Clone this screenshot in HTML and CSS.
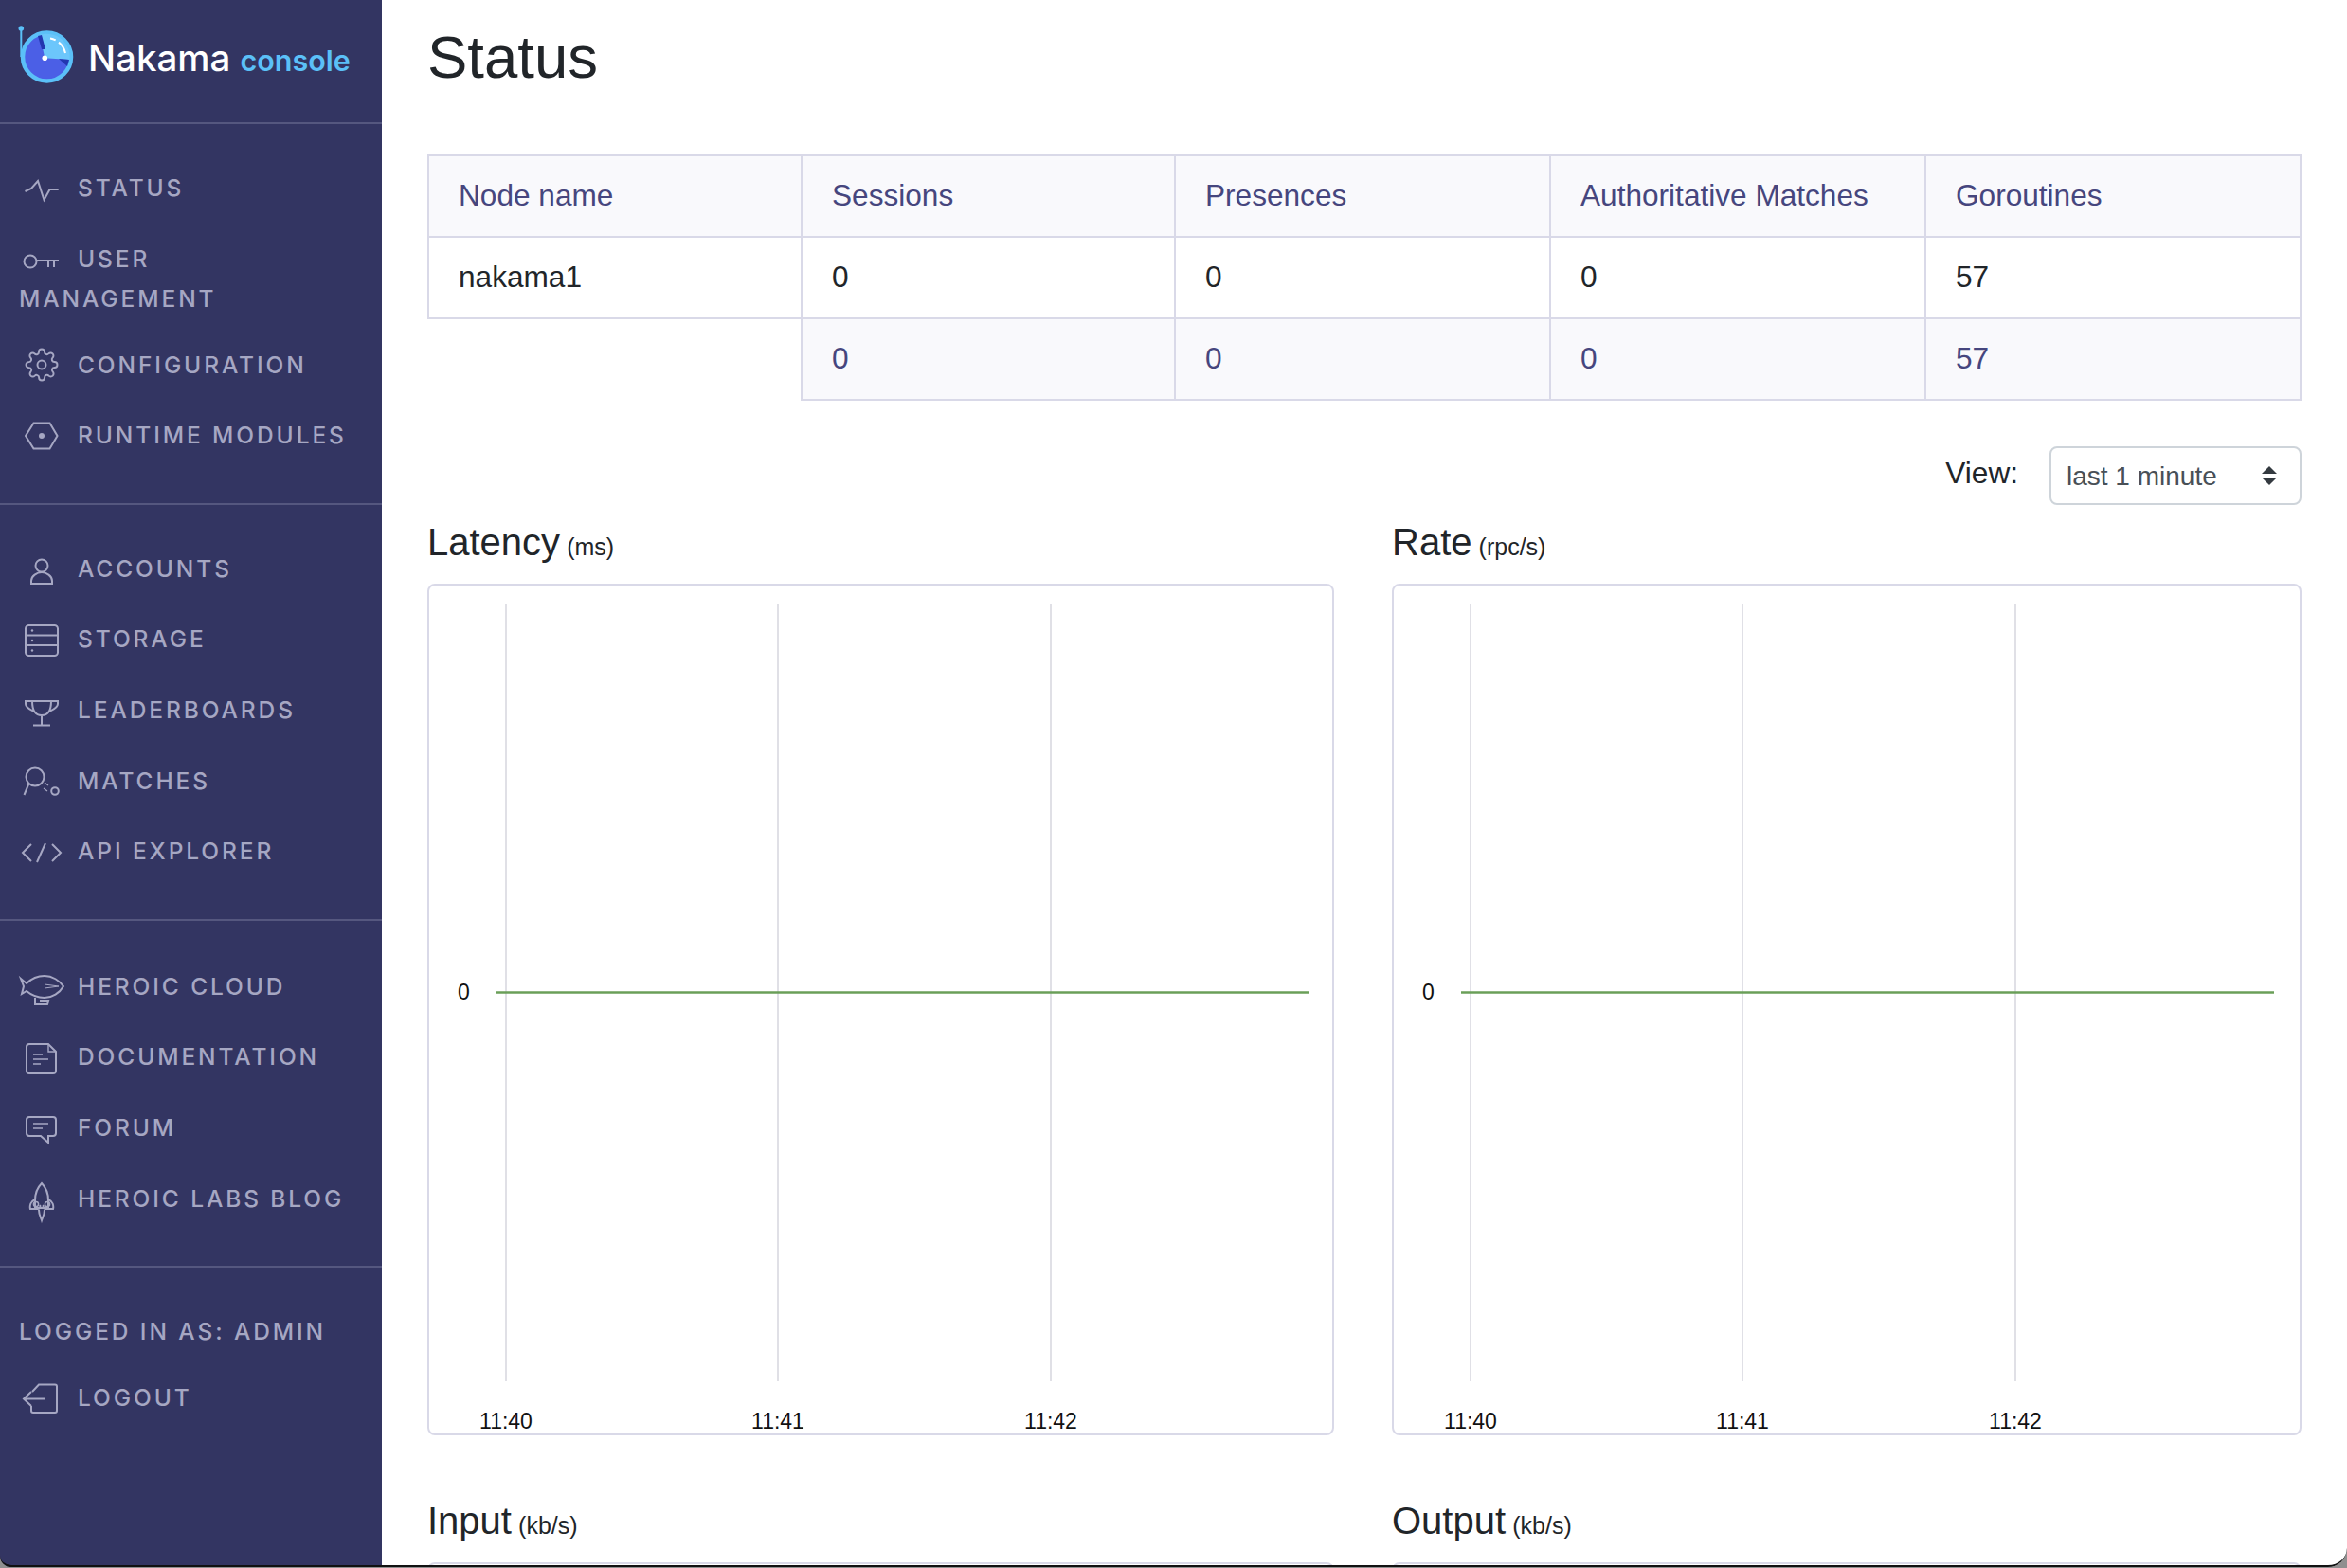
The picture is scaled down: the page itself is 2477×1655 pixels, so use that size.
FILE: index.html
```html
<!DOCTYPE html>
<html lang="en">
<head>
    <meta charset="UTF-8">
    <title>Nakama console</title>
    <link rel="stylesheet" href="styles.css">
</head>
<body>
    <aside class="sidebar">
        <a class="brand" href="#">
            <svg class="brand-logo" width="64" height="64" viewBox="0 0 64 64">
                <path d="M4.3 4V34" stroke="#5bc0f8" stroke-width="2" fill="none"/>
                <circle cx="4.3" cy="4" r="2.8" fill="#5bc0f8"/>
                <circle cx="31.5" cy="34" r="25.5" fill="#4b5fe6" stroke="#5bc0f8" stroke-width="4.5"/>
                <path d="M29.3 35.3L24 11A24 24 0 0 1 55.4 37Z" fill="#6cc6fb"/>
                <path d="M22 12L26 11L30 26L26 26Z" fill="#2336b0"/>
                <path d="M44 36L55 37L53 44Z" fill="#2336b0"/>
                <path d="M35 14.5A20 20 0 0 1 51 30" stroke="#fff" stroke-width="2" stroke-dasharray="6 4 24" fill="none"/>
                <circle cx="29.3" cy="35.3" r="2.8" fill="#fff"/>
            </svg>
            <span class="brand-name">Nakama</span>
            <span class="brand-sub">console</span>
        </a>

        <nav class="nav-section">
            <a class="nav-item" href="#">
                <svg class="nav-icon" viewBox="0 0 44 36"><path d="M4.5 21L11 18L18 10L24.5 30L30.5 19H39.7"/></svg>STATUS
            </a>
            <a class="nav-item" href="#">
                <svg class="nav-icon" viewBox="0 0 44 36"><circle cx="10" cy="21" r="6.5"/><path d="M16.5 20H40M29 20V27M35 20V27"/></svg>USER<br>MANAGEMENT
            </a>
            <a class="nav-item" href="#">
                <svg class="nav-icon" viewBox="0 0 44 36"><g transform="translate(4 0) scale(1.5)" stroke-width="1.3"><circle cx="12" cy="12" r="3"/><path d="M19.4 15a1.65 1.65 0 0 0 .33 1.82l.06.06a2 2 0 0 1 0 2.83 2 2 0 0 1-2.83 0l-.06-.06a1.65 1.65 0 0 0-1.82-.33 1.65 1.65 0 0 0-1 1.51V21a2 2 0 0 1-2 2 2 2 0 0 1-2-2v-.09A1.65 1.65 0 0 0 9 19.4a1.65 1.65 0 0 0-1.82.33l-.06.06a2 2 0 0 1-2.83 0 2 2 0 0 1 0-2.83l.06-.06a1.65 1.65 0 0 0 .33-1.82 1.65 1.65 0 0 0-1.51-1H3a2 2 0 0 1-2-2 2 2 0 0 1 2-2h.09A1.65 1.65 0 0 0 4.6 9a1.65 1.65 0 0 0-.33-1.82l-.06-.06a2 2 0 0 1 0-2.83 2 2 0 0 1 2.83 0l.06.06a1.65 1.65 0 0 0 1.82.33H9a1.65 1.65 0 0 0 1-1.51V3a2 2 0 0 1 2-2 2 2 0 0 1 2 2v.09a1.65 1.65 0 0 0 1 1.51 1.65 1.65 0 0 0 1.82-.33l.06-.06a2 2 0 0 1 2.83 0 2 2 0 0 1 0 2.83l-.06.06a1.65 1.65 0 0 0-.33 1.82V9a1.65 1.65 0 0 0 1.51 1H21a2 2 0 0 1 2 2 2 2 0 0 1-2 2h-.09a1.65 1.65 0 0 0-1.51 1z"/></g></svg>CONFIGURATION
            </a>
            <a class="nav-item" href="#">
                <svg class="nav-icon" viewBox="0 0 44 36"><path d="M5 18L13.5 4.5H30.5L38.5 18L30.5 31.5H13.5Z"/><circle class="dot" cx="22" cy="18" r="3"/></svg>RUNTIME MODULES
            </a>
        </nav>

        <nav class="nav-section">
            <a class="nav-item" href="#">
                <svg class="nav-icon" viewBox="0 0 44 36"><circle cx="22" cy="14" r="6.5"/><path d="M11 33V30C11 25 17 21 22 21S33 25 33 30V33Z"/></svg>ACCOUNTS
            </a>
            <a class="nav-item" href="#">
                <svg class="nav-icon" viewBox="0 0 44 36"><rect x="5" y="3" width="34" height="32" rx="3.5"/><path d="M5 13.5H39M5 24H39"/><circle class="dot" cx="12" cy="8.5" r="1.2"/><circle class="dot" cx="12" cy="19" r="1.2"/><circle class="dot" cx="12" cy="29.5" r="1.2"/></svg>STORAGE
            </a>
            <a class="nav-item" href="#">
                <svg class="nav-icon" viewBox="0 0 44 36"><path d="M12 8C12 17 15 23 22 23S32 17 32 8ZM12 8H5V11C5 15 10 17 14 19M32 8H39V11C39 15 34 17 30 19M22 23V33M13 33.5H31"/></svg>LEADERBOARDS
            </a>
            <a class="nav-item" href="#">
                <svg class="nav-icon" viewBox="0 0 44 36"><circle cx="15" cy="14" r="9.5"/><path d="M8.5 21L3.5 33"/><path d="M25 20L29 23M24 26L28 29" stroke-width="1.2"/><circle cx="36" cy="29" r="3.8"/></svg>MATCHES
            </a>
            <a class="nav-item" href="#">
                <svg class="nav-icon" viewBox="0 0 44 36"><path d="M11 10L2 19L11 28M26 9L17 29M33 10L42 19L33 28"/></svg>API EXPLORER
            </a>
        </nav>

        <nav class="nav-section nav-links">
            <a class="nav-item" href="#">
                <svg class="nav-icon" viewBox="0 0 44 36"><path d="M0 9L6 14C12 8 19 6 25 6C33 6 41 11 45 17C41 24 33 29 25 29C18 29 12 27 6 22L1 25L3 17Z"/><path d="M25 15L40 17L25 19" stroke-width="1"/><path d="M15 29V36H28L29 33H20"/></svg>HEROIC CLOUD
            </a>
            <a class="nav-item" href="#">
                <svg class="nav-icon" viewBox="0 0 44 36"><path d="M9 4H29L37 12V32A3 3 0 0 1 34 35H9A3 3 0 0 1 6 32V7A3 3 0 0 1 9 4Z"/><path d="M29 4V12H37M13 15H23M13 20H29M13 25H21" stroke-width="1.4"/></svg>DOCUMENTATION
            </a>
            <a class="nav-item" href="#">
                <svg class="nav-icon" viewBox="0 0 44 36"><path d="M9 6H34A3 3 0 0 1 37 9V23A3 3 0 0 1 34 26H29V33L21 26H9A3 3 0 0 1 6 23V9A3 3 0 0 1 9 6Z"/><path d="M13 13H29M13 18H23" stroke-width="1.4"/></svg>FORUM
            </a>
            <a class="nav-item" href="#">
                <svg class="nav-icon" viewBox="0 0 44 36"><path d="M22 2C17 7 15 14 15 20V28H29V20C29 14 27 7 22 2Z"/><path d="M15 19C11 21 9 25 10 29H18C20 29 21 27 20 25M29 19C33 21 35 25 34 29H26C24 29 23 27 24 25M19 30C19 35 21 38 22 41C23 38 25 35 25 30"/><circle cx="16" cy="24" r="2.6" stroke-width="1.5"/><circle cx="28" cy="24" r="2.6" stroke-width="1.5"/></svg>HEROIC LABS BLOG
            </a>
        </nav>

        <div class="nav-section">
            <div class="nav-item">LOGGED IN AS: ADMIN</div>
            <a class="nav-item" href="#">
                <svg class="nav-icon" viewBox="0 0 44 36"><path d="M12 12L19 4.5H36A2 2 0 0 1 38 6.5V32A2 2 0 0 1 36 34H13A2 2 0 0 1 11 32V27M3 19.5H25M11 12L3 19.5L11 27"/></svg>LOGOUT
            </a>
        </div>
    </aside>

    <main class="content">
        <h1 class="page-title">Status</h1>

        <table class="status-table">
            <thead>
                <tr>
                    <th class="col-node">Node name</th>
                    <th class="col-sessions">Sessions</th>
                    <th class="col-other">Presences</th>
                    <th class="col-other">Authoritative Matches</th>
                    <th>Goroutines</th>
                </tr>
            </thead>
            <tbody>
                <tr>
                    <td>nakama1</td>
                    <td>0</td>
                    <td>0</td>
                    <td>0</td>
                    <td>57</td>
                </tr>
                <tr class="totals">
                    <td class="blank"></td>
                    <td>0</td>
                    <td>0</td>
                    <td>0</td>
                    <td>57</td>
                </tr>
            </tbody>
        </table>

        <div class="view-row">
            <label class="view-label" for="view">View:</label>
            <select class="view-select" id="view">
                <option>last 1 minute</option>
            </select>
        </div>

        <div class="chart-grid">
            <section>
                <h2 class="chart-title">Latency <small>(ms)</small></h2>
                <div class="chart-card">
                    <svg class="chart">
                        <path class="grid-line" d="M81 19V840M368 19V840M656 19V840"/>
                        <path class="data-line" d="M71 429.5H928"/>
                        <text x="30" y="437">0</text>
                        <text class="tick" x="81" y="890">11:40</text>
                        <text class="tick" x="368" y="890">11:41</text>
                        <text class="tick" x="656" y="890">11:42</text>
                    </svg>
                </div>
            </section>
            <section>
                <h2 class="chart-title">Rate <small>(rpc/s)</small></h2>
                <div class="chart-card">
                    <svg class="chart">
                        <path class="grid-line" d="M81 19V840M368 19V840M656 19V840"/>
                        <path class="data-line" d="M71 429.5H929"/>
                        <text x="30" y="437">0</text>
                        <text class="tick" x="81" y="890">11:40</text>
                        <text class="tick" x="368" y="890">11:41</text>
                        <text class="tick" x="656" y="890">11:42</text>
                    </svg>
                </div>
            </section>
            <section>
                <h2 class="chart-title">Input <small>(kb/s)</small></h2>
                <div class="chart-card"></div>
            </section>
            <section>
                <h2 class="chart-title">Output <small>(kb/s)</small></h2>
                <div class="chart-card"></div>
            </section>
        </div>
    </main>

    <!-- bottom edge of the captured window -->
    <div class="window-edge"></div>
</body>
</html>
```

FILE: styles.css
```css
* {
    box-sizing: border-box;
}

html, body {
    height: 100%;
}

body {
    position: relative;
    display: flex;
    margin: 0;
    overflow: hidden;
    font-family: "Liberation Sans", Arial, sans-serif;
    color: #212529;
    background-color: #ffffff;
}

.sidebar {
    flex: 0 0 403px;
    background-color: #333562;
    font-family: Inter, "Liberation Sans", sans-serif;
    font-size: 24.5px;
    font-weight: 500;
    line-height: 37.5px;
    letter-spacing: 2.9px;
    color: #a6a7c3;
}

.brand {
    display: flex;
    align-items: baseline;
    height: 131px;
    padding-left: 18px;
    border-bottom: 2px solid #55577f;
    text-decoration: none;
    letter-spacing: 0;
}

.brand-logo {
    align-self: flex-start;
    margin-top: 26px;
    margin-right: 11px;
}

.brand-name {
    margin-top: 40px;
    font-size: 38.5px;
    line-height: 42px;
    font-weight: 500;
    color: #ffffff;
}

.brand-sub {
    margin-left: 10px;
    font-size: 30.5px;
    font-weight: 600;
    color: #5bc0f8;
}

.nav-section {
    padding: 33px 0 31px;
    border-bottom: 2px solid #55577f;
}

.nav-links {
    padding-top: 35px;
}

.nav-section:last-child {
    border-bottom: none;
}

.nav-item {
    display: block;
    padding: 16px 20px;
    color: #a6a7c3;
    text-decoration: none;
}

.nav-icon {
    width: 44px;
    height: 36px;
    margin-left: 2px;
    margin-right: 16px;
    margin-bottom: 5.85px;
    vertical-align: -15.6px;
    overflow: visible;
    fill: none;
    stroke: #a6a7c3;
    stroke-width: 2;
}

.nav-icon .dot {
    fill: #a6a7c3;
    stroke: none;
}

.content {
    flex: 1;
    min-width: 0;
    padding: 22px 48px 0;
}

.page-title {
    margin: 0 0 64px;
    font-size: 63.5px;
    line-height: 77px;
    font-weight: 400;
}

.status-table {
    width: 100%;
    border-collapse: collapse;
    table-layout: fixed;
    font-size: 31.6px;
}

.status-table th,
.status-table td {
    height: 86px;
    padding: 0 31px 2px;
    border: 2px solid #d9d9e8;
    text-align: left;
    font-weight: 400;
}

.status-table .col-node {
    width: 394px;
}

.status-table .col-sessions {
    width: 394px;
}

.status-table .col-other {
    width: 396px;
}

.status-table th,
.totals td {
    background-color: #f9f9fc;
    color: #46467e;
}

.status-table .blank {
    background-color: #ffffff;
    border-left: none;
    border-bottom: none;
}

.view-row {
    display: flex;
    justify-content: flex-end;
    align-items: center;
    gap: 33px;
    margin-top: 48px;
}

.view-label {
    font-size: 31.6px;
    margin-bottom: 6px;
}

.view-select {
    width: 266px;
    height: 62px;
    padding: 0 16px;
    border: 2px solid #ced4da;
    border-radius: 8px;
    appearance: none;
    font-family: inherit;
    font-size: 28px;
    color: #495057;
    background: #ffffff url("data:image/svg+xml,%3Csvg xmlns='http://www.w3.org/2000/svg' width='16' height='20'%3E%3Cpath fill='%23343a40' d='M8 0l8 8H0zM8 20l8-8H0z'/%3E%3C/svg%3E") no-repeat right 24px center;
}

.chart-grid {
    display: grid;
    grid-template-columns: 957px 960px;
    column-gap: 61px;
    row-gap: 66px;
    margin-top: 15px;
}

.chart-title {
    margin: 0 0 15px;
    font-size: 40px;
    line-height: 48px;
    font-weight: 400;
}

.chart-title small {
    margin-left: -4px;
    font-size: 25px;
}

.chart-card {
    height: 899px;
    border: 2px solid #d9d9e8;
    border-radius: 8px;
}

.chart {
    display: block;
    width: 100%;
    height: 100%;
    font-size: 23px;
    fill: #111111;
}

.tick {
    text-anchor: middle;
}

.grid-line {
    fill: none;
    stroke: #e0e0e6;
    stroke-width: 2;
}

.data-line {
    fill: none;
    stroke: #6a9f58;
    stroke-width: 2.5;
}

.window-edge {
    position: absolute;
    top: -100px;
    left: 0;
    right: 0;
    bottom: 1px;
    border-bottom: 2px solid #111111;
    border-radius: 0 0 20px 12px;
    box-shadow: 0 0 0 30px #8f8f8f;
    pointer-events: none;
}
```
